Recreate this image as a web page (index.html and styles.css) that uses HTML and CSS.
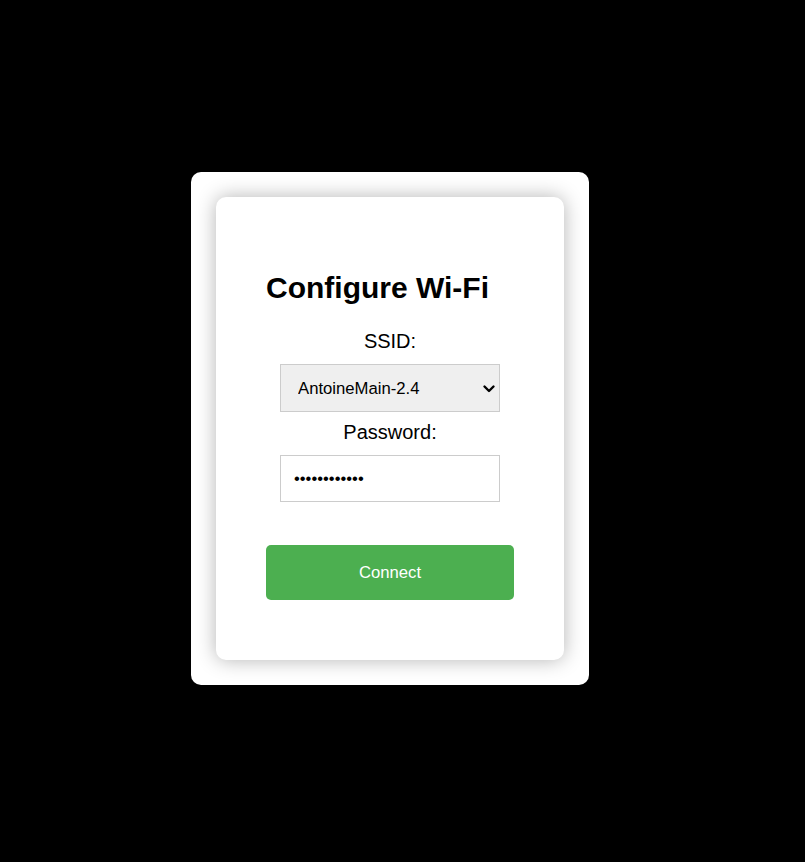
FILE: index.html
```html
<!DOCTYPE html>
<html lang="en">
<head>
<meta charset="utf-8">
<title>Configure Wi-Fi</title>
<link rel="stylesheet" href="styles.css">
</head>
<body>
<div class="frame">
  <div class="card">
    <h2 class="title">Configure Wi-Fi</h2>
    <form class="form">
      <label class="label" for="ssid">SSID:</label>
      <div class="select-wrap">
        <select class="select" id="ssid">
          <option>AntoineMain-2.4</option>
        </select>
        <svg class="chevron" width="14" height="9" viewBox="0 0 14 9" aria-hidden="true">
          <path d="M2.5 2.5 L7 7 L11.5 2.5" fill="none" stroke="#000" stroke-width="2.4" stroke-linecap="round" stroke-linejoin="round"/>
        </svg>
      </div>
      <label class="label" for="pw">Password:</label>
      <input class="input" id="pw" type="password" value="abcdefghijkl">
      <button class="button" type="button">Connect</button>
    </form>
  </div>
</div>
</body>
</html>
```
FILE: styles.css
```css
html, body {
  margin: 0;
  padding: 0;
  background: #000;
  height: 100%;
}
body {
  font-family: "Liberation Sans", Arial, sans-serif;
  display: flex;
  justify-content: flex-start;
  align-items: flex-start;
}
.frame {
  margin: 172px 0 0 191px;
  background: #fff;
  border-radius: 10px;
  padding: 25px;
}
.card {
  width: 248px;
  padding: 50px;
  background: #fff;
  border-radius: 10px;
  box-shadow: 0 0 20px rgba(0, 0, 0, 0.3);
}
.title {
  margin: 24px 0 0;
  font-size: 30px;
  font-weight: bold;
  color: #000;
  line-height: normal;
}
.form {
  display: flex;
  flex-direction: column;
  align-items: center;
  margin-top: 25px;
}
.label {
  font-size: 20px;
  color: #000;
  line-height: normal;
}
.select-wrap {
  position: relative;
  width: 220px;
  height: 48px;
  margin: 11px 0 9px;
}
.select, .input {
  box-sizing: border-box;
  width: 220px;
  font-family: "Liberation Sans", Arial, sans-serif;
  font-size: 17px;
  color: #000;
  border: 1px solid #ccc;
  border-radius: 0;
  outline: none;
}
.select {
  -webkit-appearance: none;
  appearance: none;
  height: 48px;
  padding: 0 24px 0 17px;
  background: #efefef;
  font-size: 16.7px;
}
.chevron {
  position: absolute;
  right: 4px;
  top: 20px;
  pointer-events: none;
}
.input {
  height: 47px;
  padding: 0 12px 0 13px;
  background: #fff;
  margin: 11px 0 43px;
  font-size: 16.6px;
}
.button {
  width: 248px;
  height: 55px;
  margin-bottom: 10px;
  background: #4caf50;
  color: #fff;
  border: none;
  border-radius: 5px;
  font-family: "Liberation Sans", Arial, sans-serif;
  font-size: 16.7px;
}
```
